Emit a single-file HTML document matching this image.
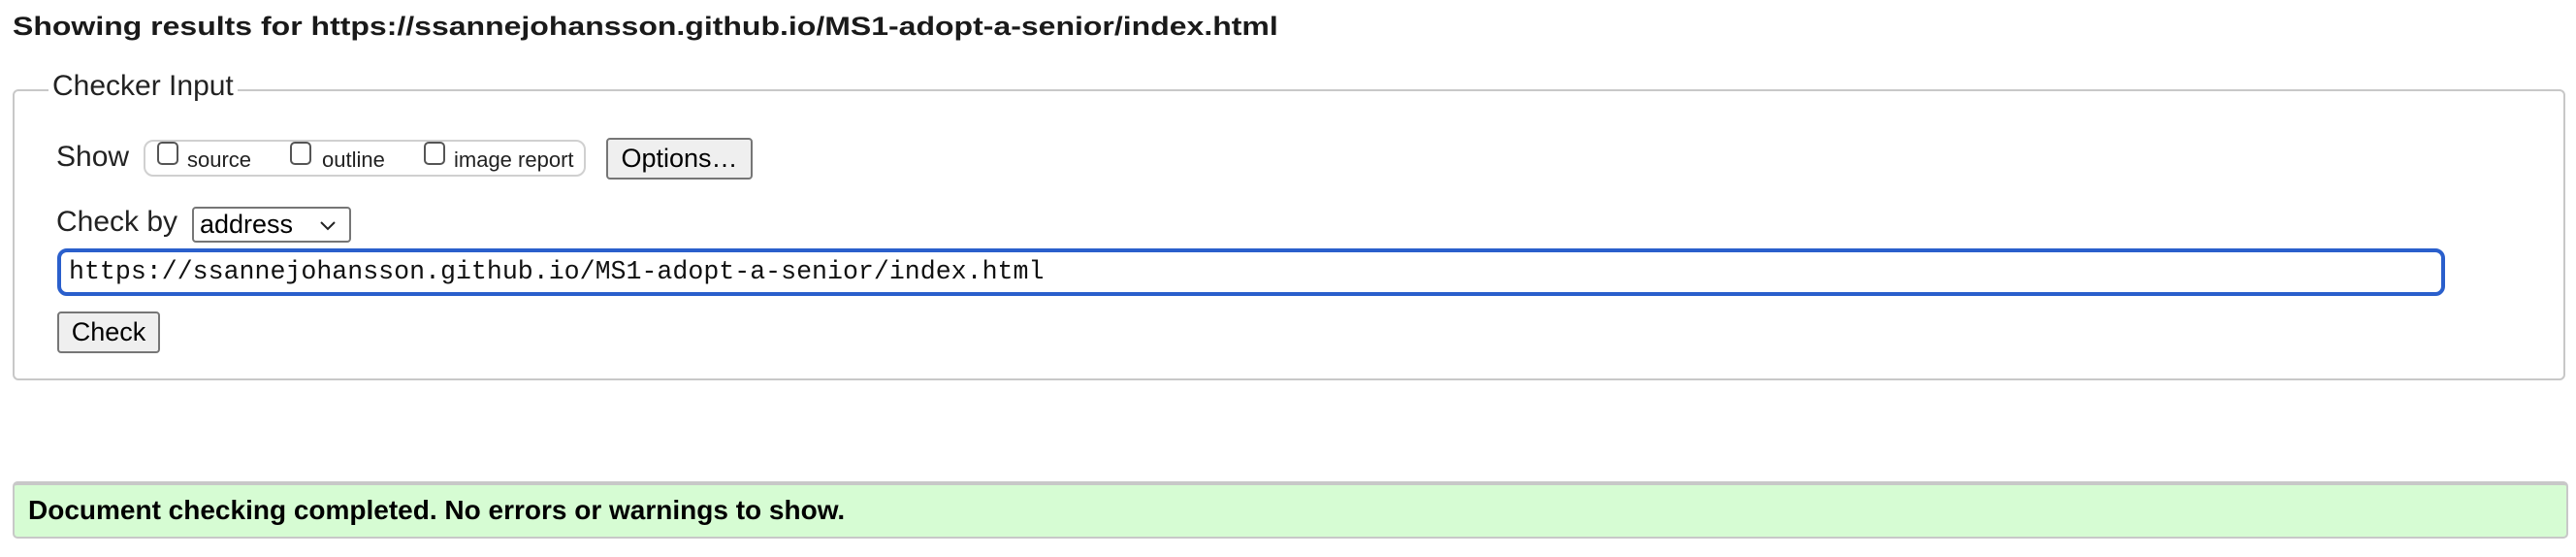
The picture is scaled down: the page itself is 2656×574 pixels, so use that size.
<!DOCTYPE html>
<html><head><meta charset="utf-8"><style>
html,body{margin:0;padding:0;background:#fff;width:2656px;height:574px;overflow:hidden;font-family:"Liberation Sans",Arial,sans-serif;color:#000}
.a{position:absolute;white-space:nowrap}
h2{position:absolute;left:13px;top:12px;margin:0;font-size:27px;font-weight:bold;color:#1a1a1a;white-space:nowrap;transform-origin:0 0;transform:scaleX(1.185)}
.fs{position:absolute;left:13px;top:92px;width:2632px;height:300px;border:2px solid #c8c8c8;border-radius:6px;box-sizing:border-box}
.leg{position:absolute;left:50px;top:72px;background:#fff;padding:0 4px;font-size:30px;color:#222}
.lbl{font-size:30px;color:#222}
.box{position:absolute;left:148px;top:144px;width:456px;height:38px;border:2px solid #d0d0d0;border-radius:10px;box-sizing:border-box}
.cb{position:absolute;width:22px;height:24px;border:2px solid #555;border-radius:5px;box-sizing:border-box;background:#fff}
.sm{font-size:22px;color:#222}
.btn{position:absolute;background:#efefef;border:2px solid #767676;border-radius:4px;box-sizing:border-box;font-size:27px;display:flex;align-items:center;justify-content:center}
.sel{position:absolute;left:198px;top:213px;width:164px;height:37px;border:2px solid #767676;border-radius:4px;box-sizing:border-box;font-size:27px;padding-left:6px;line-height:33px}
.inp{position:absolute;left:59px;top:256px;width:2462px;height:49px;border:4px solid #2a5fcc;border-radius:10px;box-sizing:border-box;font-family:"Liberation Mono",monospace;font-size:26.6px;line-height:41px;padding-left:8px;color:#111}
.ok{position:absolute;left:13px;top:496px;width:2635px;height:59px;background:#d6fcd3;border:2px solid #c8c8c8;border-top-width:4px;border-radius:5px;box-sizing:border-box;font-weight:bold;font-size:28px;padding-left:14px;line-height:52px}
</style></head><body>
<h2>Showing results for https://ssannejohansson.github.io/MS1-adopt-a-senior/index.html</h2>
<div class="fs"></div>
<div class="a leg">Checker Input</div>
<div class="a lbl" style="left:58px;top:145px">Show</div>
<div class="box"></div>
<div class="cb" style="left:162px;top:146px"></div><div class="a sm" style="left:193px;top:152px">source</div>
<div class="cb" style="left:299px;top:146px"></div><div class="a sm" style="left:332px;top:152px">outline</div>
<div class="cb" style="left:437px;top:146px"></div><div class="a sm" style="left:468px;top:152px">image report</div>
<div class="btn" style="left:625px;top:142px;width:151px;height:43px">Options…</div>
<div class="a lbl" style="left:58px;top:212px">Check by</div>
<div class="sel">address<svg style="position:absolute;right:14px;top:13px" width="16" height="10" viewBox="0 0 16 10"><path d="M1 1L8 8L15 1" fill="none" stroke="#222" stroke-width="2"/></svg></div>
<div class="inp">https://ssannejohansson.github.io/MS1-adopt-a-senior/index.html</div>
<div class="btn" style="left:59px;top:321px;width:106px;height:43px">Check</div>
<div class="ok">Document checking completed. No errors or warnings to show.</div>
</body></html>
